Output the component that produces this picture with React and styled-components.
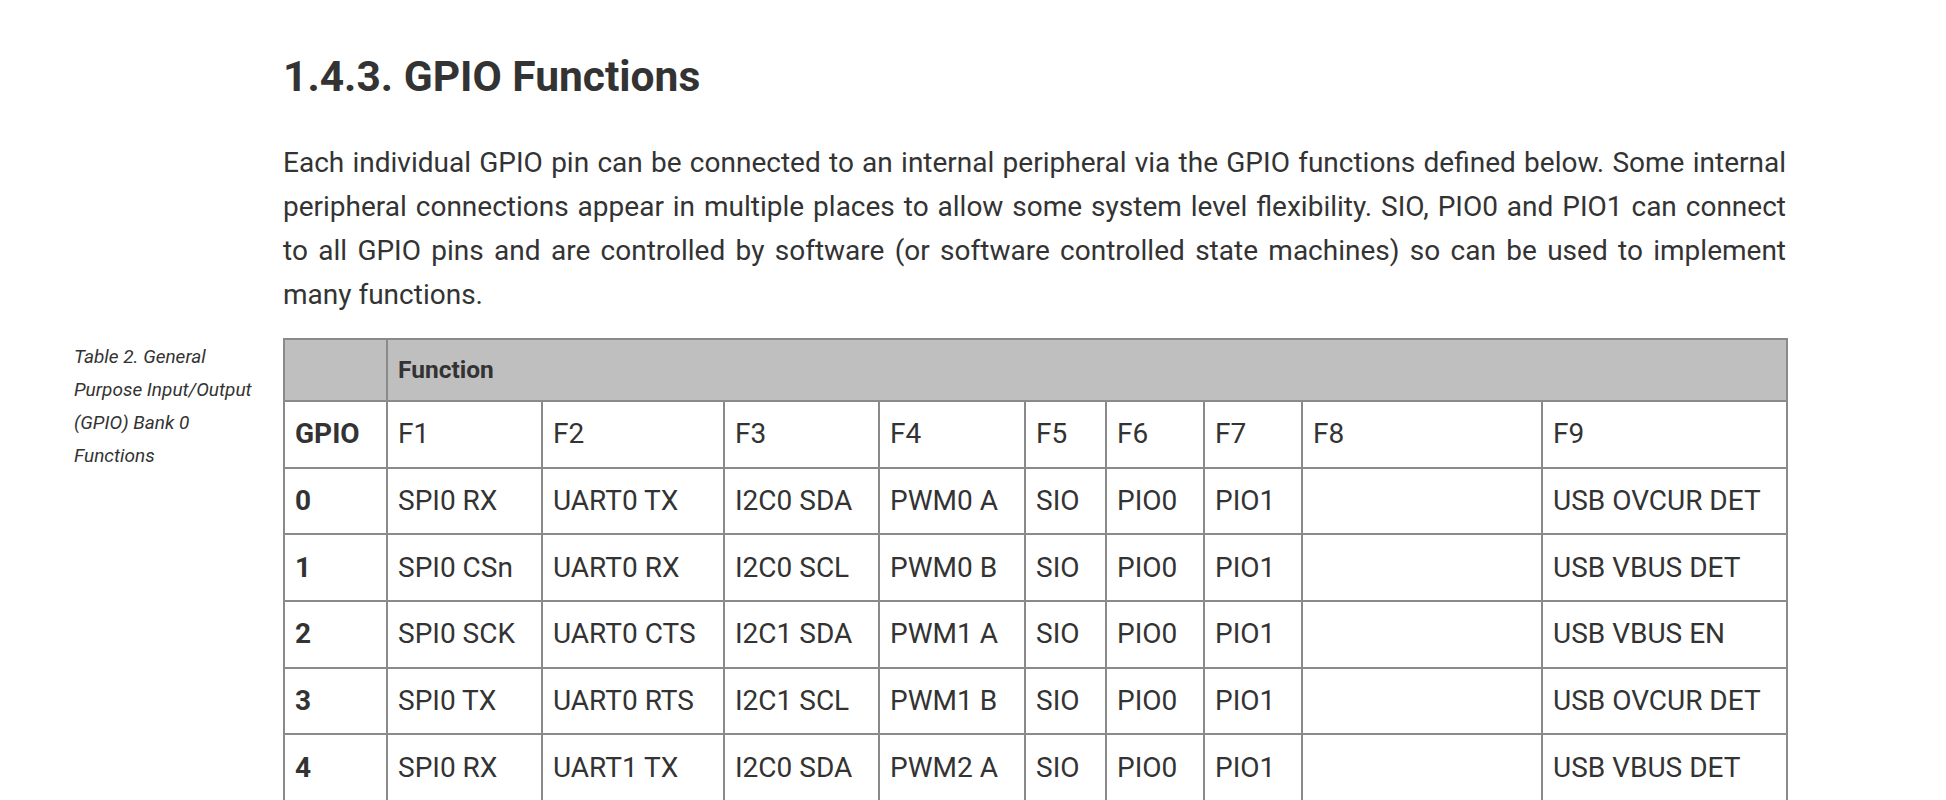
import React from 'react';
import styled, { createGlobalStyle } from 'styled-components';

const GlobalStyle = createGlobalStyle`
    body {
        margin: 0;
        background: #fff;
        font-family: Roboto, "Liberation Sans", sans-serif;
        color: #333;
    }
`;

const Page = styled.div`
    display: grid;
    grid-template-columns: 185px 1503px;
    column-gap: 24px;
    padding-left: 74px;
    padding-top: 51px;
`;

const Heading = styled.h2`
    grid-column: 2;
    margin: 0 0 39px;
    font-size: 42.5px;
    font-weight: 700;
    line-height: 1.2;
    color: #333;
`;

const Paragraph = styled.p`
    grid-column: 2;
    margin: 0 0 21px;
    font-size: 28px;
    line-height: 44px;
    text-align: justify;
    color: #333;
`;

const Caption = styled.div`
    grid-column: 1;
    padding-top: 2px;
    font-size: 19px;
    font-style: italic;
    line-height: 33px;
    color: #333;
`;

const Table = styled.table`
    grid-column: 2;
    width: 1503px;
    border-collapse: collapse;
    table-layout: fixed;
    color: #333;
`;

const Cell = styled.td`
    border: 2px solid #8a8a8a;
    padding: 0 10px;
    height: ${(p) => (p.$head ? '60px' : '64.7px')};
    background: ${(p) => (p.$head ? '#bfbfbf' : '#fff')};
    font-size: ${(p) => (p.$head ? '24.5px' : '28px')};
    font-weight: ${(p) => (p.$bold ? 700 : 400)};
    line-height: 1.3;
    text-align: left;
    vertical-align: middle;
    white-space: nowrap;
`;

const widths = [103, 155, 182, 155, 146, 81, 98, 98, 240, 245];

const rows = [
    ['0', 'SPI0 RX', 'UART0 TX', 'I2C0 SDA', 'PWM0 A', 'SIO', 'PIO0', 'PIO1', '', 'USB OVCUR DET'],
    ['1', 'SPI0 CSn', 'UART0 RX', 'I2C0 SCL', 'PWM0 B', 'SIO', 'PIO0', 'PIO1', '', 'USB VBUS DET'],
    ['2', 'SPI0 SCK', 'UART0 CTS', 'I2C1 SDA', 'PWM1 A', 'SIO', 'PIO0', 'PIO1', '', 'USB VBUS EN'],
    ['3', 'SPI0 TX', 'UART0 RTS', 'I2C1 SCL', 'PWM1 B', 'SIO', 'PIO0', 'PIO1', '', 'USB OVCUR DET'],
    ['4', 'SPI0 RX', 'UART1 TX', 'I2C0 SDA', 'PWM2 A', 'SIO', 'PIO0', 'PIO1', '', 'USB VBUS DET'],
];

export default function App() {
    return (
        <>
            <GlobalStyle />
            <Page>
                <Heading>1.4.3. GPIO Functions</Heading>
                <Paragraph>
                    Each individual GPIO pin can be connected to an internal peripheral via the GPIO functions defined
                    below. Some internal peripheral connections appear in multiple places to allow some system level
                    flexibility. SIO, PIO0 and PIO1 can connect to{'\u00a0'}all GPIO pins and are controlled by software (or
                    software controlled state machines) so can be used to implement many functions.
                </Paragraph>
                <Caption>Table 2. General Purpose Input/Output (GPIO) Bank 0 Functions</Caption>
                <Table>
                    <colgroup>
                        {widths.map((w, i) => (
                            <col key={i} style={{ width: w }} />
                        ))}
                    </colgroup>
                    <thead>
                        <tr>
                            <Cell as="th" $head />
                            <Cell as="th" $head $bold colSpan={9}>Function</Cell>
                        </tr>
                    </thead>
                    <tbody>
                        <tr>
                            <Cell $bold>GPIO</Cell>
                            {['F1', 'F2', 'F3', 'F4', 'F5', 'F6', 'F7', 'F8', 'F9'].map((f) => (
                                <Cell key={f}>{f}</Cell>
                            ))}
                        </tr>
                        {rows.map((r) => (
                            <tr key={r[0]}>
                                {r.map((c, i) => (
                                    <Cell key={i} $bold={i === 0}>{c}</Cell>
                                ))}
                            </tr>
                        ))}
                    </tbody>
                </Table>
            </Page>
        </>
    );
}
